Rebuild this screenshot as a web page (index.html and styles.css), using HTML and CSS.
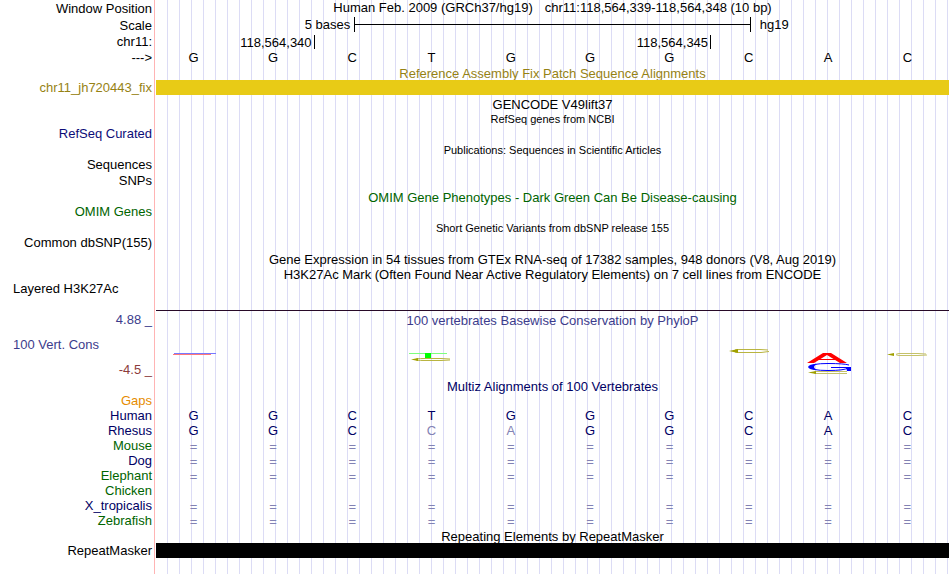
FILE: index.html
```html
<!DOCTYPE html>
<html lang="en">
<head>
<meta charset="UTF-8">
<meta name="viewport" content="width=device-width, initial-scale=1.0">
<title>Genome Browser - hg19 chr11:118,564,339-118,564,348</title>
<link rel="stylesheet" href="styles.css">
</head>
<body>

<div class="browser">
    <!-- Position and ruler -->
    <div class="row tall">
        <div class="label">Window Position</div>
        <div class="track position"><span>Human Feb. 2009 (GRCh37/hg19)</span><span>chr11:118,564,339-118,564,348 (10 bp)</span></div>
    </div>
    <div class="row tall">
        <div class="label">Scale</div>
        <div class="track scale">
            <span class="scale-size">5 bases</span>
            <span class="scale-bar"></span>
            <span class="scale-db">hg19</span>
        </div>
    </div>
    <div class="row medium">
        <div class="label">chr11:</div>
        <div class="track ruler">
            <span class="tick first">118,564,340</span>
            <span class="tick">118,564,345</span>
        </div>
    </div>
    <table class="bases">
        <tr><th scope="row">---&gt;</th><td>G</td><td>G</td><td>C</td><td>T</td><td>G</td><td>G</td><td>G</td><td>C</td><td>A</td><td>C</td></tr>
    </table>

    <!-- Fix patch -->
    <div class="row">
        <div class="label"></div>
        <div class="track title olive">Reference Assembly Fix Patch Sequence Alignments</div>
    </div>
    <div class="row">
        <div class="label olive">chr11_jh720443_fix</div>
        <div class="track bar patch"></div>
    </div>

    <!-- Genes and variants -->
    <div class="row medium">
        <div class="label"></div>
        <div class="track title">GENCODE V49lift37</div>
    </div>
    <div class="row">
        <div class="label"></div>
        <div class="track title small">RefSeq genes from NCBI</div>
    </div>
    <div class="row">
        <div class="label blue">RefSeq Curated</div>
        <div class="track"></div>
    </div>
    <div class="row medium">
        <div class="label"></div>
        <div class="track title small">Publications: Sequences in Scientific Articles</div>
    </div>
    <div class="row medium">
        <div class="label">Sequences</div>
        <div class="track"></div>
    </div>
    <div class="row">
        <div class="label">SNPs</div>
        <div class="track"></div>
    </div>
    <div class="row medium">
        <div class="label"></div>
        <div class="track title green">OMIM Gene Phenotypes - Dark Green Can Be Disease-causing</div>
    </div>
    <div class="row">
        <div class="label green">OMIM Genes</div>
        <div class="track"></div>
    </div>
    <div class="row medium">
        <div class="label"></div>
        <div class="track title small">Short Genetic Variants from dbSNP release 155</div>
    </div>
    <div class="row">
        <div class="label">Common dbSNP(155)</div>
        <div class="track"></div>
    </div>
    <div class="row medium">
        <div class="label"></div>
        <div class="track title">Gene Expression in 54 tissues from GTEx RNA-seq of 17382 samples, 948 donors (V8, Aug 2019)</div>
    </div>
    <div class="row">
        <div class="label"></div>
        <div class="track title">H3K27Ac Mark (Often Found Near Active Regulatory Elements) on 7 cell lines from ENCODE</div>
    </div>
    <div class="row layered">
        <div class="label left">Layered H3K27Ac</div>
        <div class="track"></div>
    </div>

    <!-- Conservation -->
    <div class="row conservation">
        <div class="label">
            <span class="purple">4.88 _</span>
            <span class="purple left">100 Vert. Cons</span>
            <span class="maroon">-4.5 _</span>
        </div>
        <div class="track">
            <div class="title purple">100 vertebrates Basewise Conservation by PhyloP</div>
            <svg class="logo" viewBox="0 0 793 50" preserveAspectRatio="none" aria-hidden="true">
                <!-- 339 -->
                <path d="M18 25.500H60" stroke="#7878ff" stroke-width="1"/>
                <path d="M17 26.500H55" stroke="#ff7878" stroke-width="1"/>
                <!-- 342 -->
                <path d="M253 25.500H291" stroke="#7dff7d" stroke-width="1"/>
                <path d="M269 25h6v5h-6z" fill="#00ff00"/>
                <path d="M294 31L285 30.500H268Q260 30.500 260 31.500Q260 32.500 268 32.500H285L294 32" fill="none" stroke="#b9b440" stroke-width="1"/>
                <path d="M255 31.500L262 30V33z" fill="#a0a000"/>
                <!-- 346 -->
                <path d="M612 22L604 21.500H583Q578 21.500 578 23Q578 24.500 583 24.500H605L613 23.500" fill="none" stroke="#b9b440" stroke-width="1"/>
                <path d="M573 23L582 21V25z" fill="#a0a000"/>
                <!-- 347 -->
                <path d="M651 35L667 25H675L691 35H684L671 27L658 35z" fill="#ff0000"/>
                <path d="M662 31.500H680" stroke="#ff0000" stroke-width="1"/>
                <path d="M693 37Q688 35.500 672 35.500Q655 35.500 655 39Q655 42.500 672 42.500Q688 42.500 692 40" fill="none" stroke="#0000ff" stroke-width="1"/>
                <path d="M652 39Q653 36 661 36Q655 39 661 42Q653 42 652 39z" fill="#0000ff"/>
                <path d="M675 39.500H691" stroke="#0000ff" stroke-width="1"/>
                <path d="M690 39h5v4h-4z" fill="#0000ff"/>
                <path d="M691 43.500H660Q655 44.500 660 45.500H691" fill="none" stroke="#c5c26a" stroke-width="1"/>
                <path d="M652 44.500L660 43V46z" fill="#a0a000"/>
                <!-- 348 -->
                <path d="M770 26L762 25.500H743Q737 26.500 743 27.500H762L771 27" fill="none" stroke="#c5c26a" stroke-width="1"/>
                <path d="M731 26.500L738 25V28z" fill="#a0a000"/>
            </svg>
        </div>
    </div>

    <!-- Multiz alignments -->
    <div class="row">
        <div class="label"></div>
        <div class="track title navy">Multiz Alignments of 100 Vertebrates</div>
    </div>
    <table class="bases navy">
        <tr><th scope="row" class="orange">Gaps</th><td colspan="10"></td></tr>
        <tr><th scope="row">Human</th><td>G</td><td>G</td><td>C</td><td>T</td><td>G</td><td>G</td><td>G</td><td>C</td><td>A</td><td>C</td></tr>
        <tr><th scope="row">Rhesus</th><td>G</td><td>G</td><td>C</td><td class="diff">C</td><td class="diff">A</td><td>G</td><td>G</td><td>C</td><td>A</td><td>C</td></tr>
        <tr class="unaligned"><th scope="row" class="green">Mouse</th><td>=</td><td>=</td><td>=</td><td>=</td><td>=</td><td>=</td><td>=</td><td>=</td><td>=</td><td>=</td></tr>
        <tr class="unaligned"><th scope="row">Dog</th><td>=</td><td>=</td><td>=</td><td>=</td><td>=</td><td>=</td><td>=</td><td>=</td><td>=</td><td>=</td></tr>
        <tr class="unaligned"><th scope="row" class="green">Elephant</th><td>=</td><td>=</td><td>=</td><td>=</td><td>=</td><td>=</td><td>=</td><td>=</td><td>=</td><td>=</td></tr>
        <tr><th scope="row" class="green">Chicken</th><td colspan="10"></td></tr>
        <tr class="unaligned"><th scope="row">X_tropicalis</th><td>=</td><td>=</td><td>=</td><td>=</td><td>=</td><td>=</td><td>=</td><td>=</td><td>=</td><td>=</td></tr>
        <tr class="unaligned"><th scope="row" class="green">Zebrafish</th><td>=</td><td>=</td><td>=</td><td>=</td><td>=</td><td>=</td><td>=</td><td>=</td><td>=</td><td>=</td></tr>
    </table>

    <!-- Repeats -->
    <div class="row">
        <div class="label"></div>
        <div class="track title">Repeating Elements by RepeatMasker</div>
    </div>
    <div class="row">
        <div class="label">RepeatMasker</div>
        <div class="track bar repeat"></div>
    </div>
</div>

</body>
</html>
```
FILE: styles.css
```css
body {
    margin: 0;
    background-color: #fff;
    color: #000;
    font-family: "Liberation Sans", Arial, sans-serif;
    font-size: 13px;
    line-height: 15px;
}
/* label column, pink divider, then a guide line every 12px */
.browser {
    box-sizing: border-box;
    min-height: 100vh;
    margin-right: 1px;
    padding-bottom: 16px;
    background-image:
        linear-gradient(to right, #fff 154px, #ffb4b4 154px, #ffb4b4 155px, #fff 155px, #fff 156px, transparent 156px),
        linear-gradient(to right, #dcdcf5 1px, transparent 1px);
    background-size: 100% 100%, 12px 100%;
    background-position: 0 0, 11px 0;
    background-repeat: no-repeat, repeat;
}
.row {
    display: flex;
    height: 15px;
}
.medium {
    height: 16px;
    line-height: 16px;
}
.tall {
    height: 17px;
}
.label {
    box-sizing: border-box;
    flex: 0 0 156px;
    padding-right: 4px;
    text-align: right;
    white-space: nowrap;
}
.tall .label {
    line-height: 17px;
}
.track {
    flex: 1;
    min-width: 0;
}
/* titles hang slightly low in their row, close to the track below */
.title {
    line-height: 17px;
    text-align: center;
    white-space: nowrap;
}
.medium .title {
    line-height: 19px;
}
.small {
    font-size: 11px;
}
.left {
    padding-left: 13px;
    text-align: left;
}

/* ruler */
.position {
    display: flex;
    justify-content: center;
    gap: 12px;
    white-space: nowrap;
}
.scale {
    display: flex;
}
.scale-size {
    box-sizing: border-box;
    width: 25%;
    padding-right: 4px;
    text-align: right;
}
.scale-bar {
    box-sizing: border-box;
    width: 50%;
    height: 15px;
    border: solid #000;
    border-width: 0 1px;
    background: linear-gradient(#000, #000) 0 7px / 100% 1px no-repeat;
}
.scale-db {
    padding-left: 9px;
}
.ruler {
    display: flex;
}
.tick {
    box-sizing: border-box;
    width: 50%;
    height: 14px;
    margin-top: 1px;
    padding-right: 2px;
    border-right: 1px solid #000;
    text-align: right;
    white-space: nowrap;
}
.tick.first {
    width: 20%;
}

/* base letters */
.bases {
    width: 100%;
    table-layout: fixed;
    border-collapse: collapse;
}
.bases th {
    box-sizing: border-box;
    width: 156px;
    height: 15px;
    padding: 0 4px 0 0;
    font-weight: normal;
    text-align: right;
}
.bases td {
    padding: 0 4px 0 0;
    text-align: center;
}
.diff,
.unaligned td {
    color: #8282b4;
}
.bases .unaligned td {
    padding-top: 2px;
    line-height: 13px;
}

/* filled tracks */
.patch {
    background-color: #e8cb16;
}
.repeat {
    background-color: #000;
}

/* conservation */
.layered {
    height: 29px;
}
.conservation {
    height: 68px;
    line-height: 17px;
}
.conservation .label {
    display: flex;
    flex-direction: column;
    justify-content: space-between;
    padding-top: 1px;
}
.conservation .track {
    border-top: 1px solid #280a28;
}
.conservation .title {
    height: 17px;
    line-height: 19px;
}
.logo {
    display: block;
    width: 100%;
    height: 50px;
}

.olive {
    color: #968214;
}
.blue {
    color: #0c0c78;
}
.navy {
    color: #000064;
}
.green {
    color: #006400;
}
.purple {
    color: #3c3c8c;
}
.maroon {
    color: #8c3c3c;
}
.orange {
    color: #e68c00;
}
```
